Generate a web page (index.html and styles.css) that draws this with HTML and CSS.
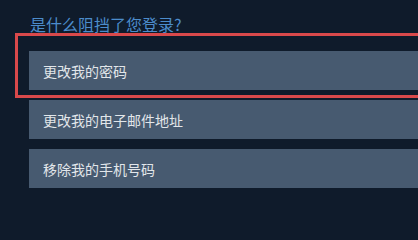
FILE: index.html
```html
<!DOCTYPE html>
<html lang="zh-CN">
<head>
<meta charset="utf-8">
<title>是什么阻挡了您登录?</title>
<link rel="stylesheet" href="styles.css">
</head>
<body>
<main class="panel">
  <h2 class="title">是什么阻挡了您登录?</h2>
  <div class="options">
    <a class="option" href="#">更改我的密码</a>
    <a class="option" href="#">更改我的电子邮件地址</a>
    <a class="option" href="#">移除我的手机号码</a>
  </div>
  <div class="highlight"></div>
</main>
</body>
</html>
```

FILE: styles.css
```css
html, body {
  margin: 0;
  padding: 0;
  height: 100%;
  background: #0f1b2b;
  overflow: hidden;
}

.panel {
  position: relative;
  padding: 13px 0 0 29px;
  font-family: "Noto Sans CJK SC", "Noto Sans", sans-serif;
}

.title {
  margin: 0 0 16px 1px;
  font-size: 16px;
  line-height: 22px;
  font-weight: 400;
  color: #4c8ccb;
}

.options {
  display: flex;
  flex-direction: column;
  gap: 10px;
}

.option {
  display: flex;
  align-items: center;
  height: 39px;
  padding-left: 14px;
  background: #475a70;
  color: #e2e6ea;
  font-size: 14px;
  text-decoration: none;
}

.highlight {
  position: absolute;
  left: 15px;
  top: 33px;
  right: -10px;
  height: 59px;
  border: 3px solid #d9494b;
  pointer-events: none;
}
```
